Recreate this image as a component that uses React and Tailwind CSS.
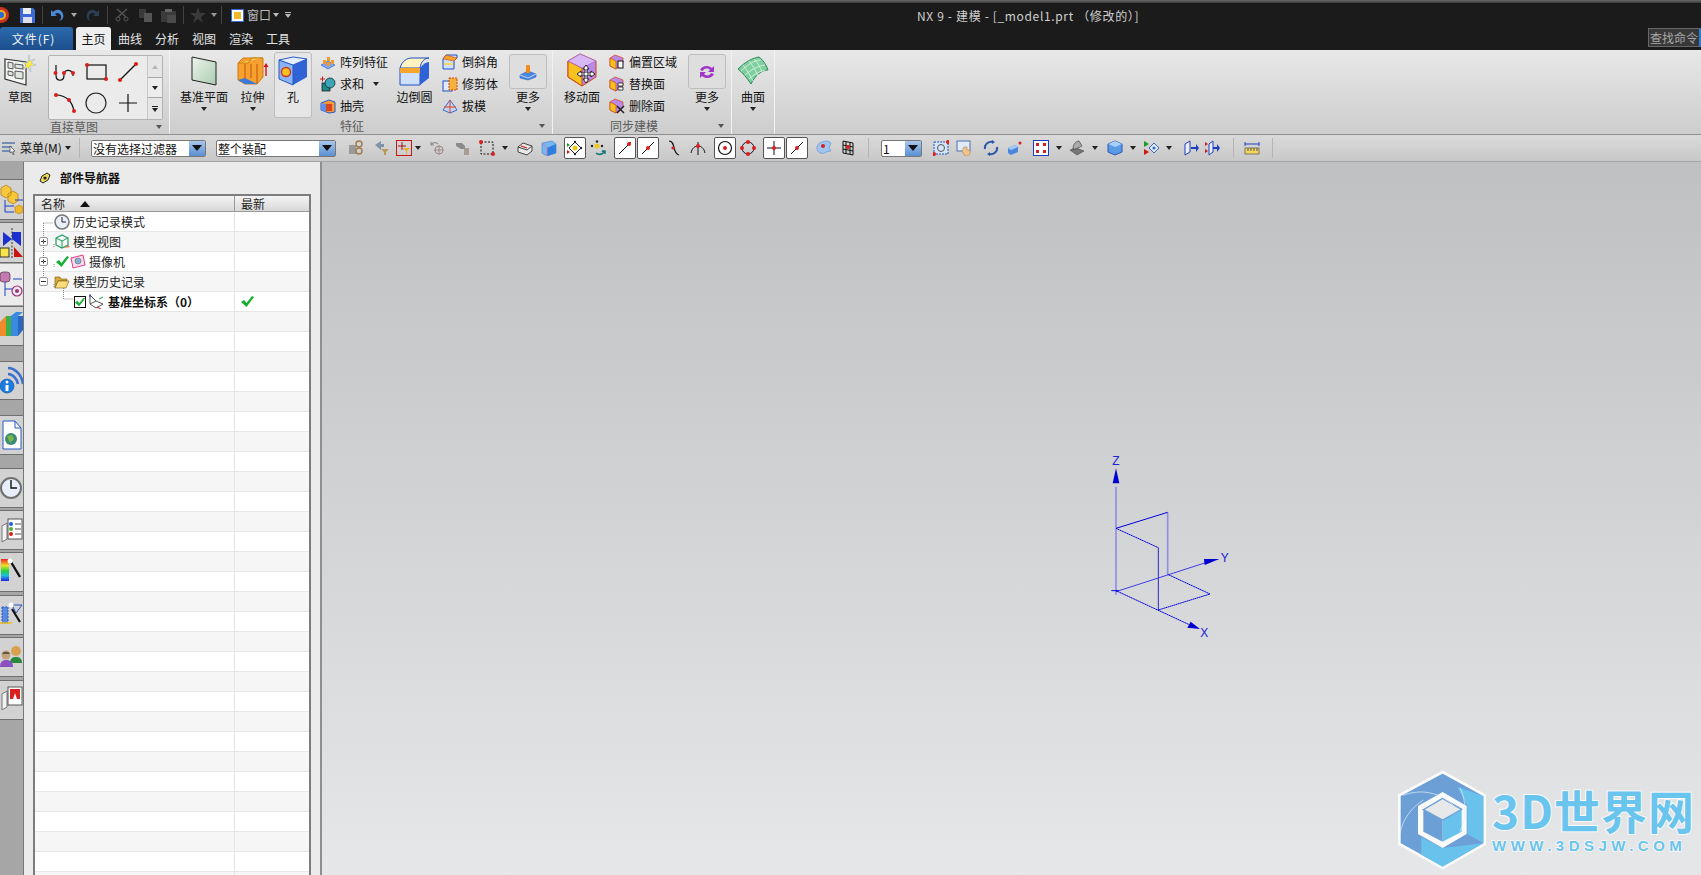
import React from "react";

const Svg = ({ s = 16, h, vb, className = "", children }) => (
  <svg width={s} height={h || s} viewBox={vb || `0 0 ${s} ${h || s}`} className={`shrink-0 block ${className}`}>
    {children}
  </svg>
);

const Dot = ({ x, y, r = 2 }) => <circle cx={x} cy={y} r={r} fill="#d81e1e" />;

// little dropdown triangle used everywhere
const Tri = ({ className = "", color = "border-t-[#222]" }) => (
  <div className={`w-0 h-0 shrink-0 border-x-[3px] border-x-transparent border-t-[4px] ${color} ${className}`} />
);

const SketchIcon = () => (
  <Svg s={32} vb="0 0 32 32">
    <path d="M1 4l21 3v23L1 24z" fill="#f4f6f4" stroke="#333" strokeWidth="1.2" />
    <path d="M4 7l5 1v6l-5-1zM11 9l8 1v4l-8-1zM4 16l5 1v4l-5-1zM11 16l8 1v7l-8-1z" fill="#e0e6e0" stroke="#333" strokeWidth=".8" />
    <path d="M25 0l1 6 5-2-4 4 5 2-6 1 1 6-3-5-5 3 3-5-4-3 6 1z" fill="#ffe93b" stroke="#8ab0ff" strokeWidth=".5" />
  </Svg>
);

const Gal = {
  spline: (
    <Svg s={26} vb="0 0 26 26">
      <path d="M4 6v10c0 7 8 7 8 0 0-6 7-6 9-1v2" fill="none" stroke="#111" strokeWidth="1.2" />
      <Dot x={3.5} y={14} /><Dot x={12} y={14} /><Dot x={21} y={14} />
    </Svg>
  ),
  rect: (
    <Svg s={26} vb="0 0 26 26">
      <rect x="4" y="6" width="19" height="14" fill="none" stroke="#111" strokeWidth="1.2" />
      <Dot x={4} y={6} /><Dot x={23} y={20} />
    </Svg>
  ),
  line: (
    <Svg s={26} vb="0 0 26 26">
      <path d="M5 21L21 5" stroke="#111" strokeWidth="1.2" />
      <Dot x={5} y={21} /><Dot x={21} y={5} />
    </Svg>
  ),
  arc: (
    <Svg s={26} vb="0 0 26 26">
      <path d="M4 5c10 0 17 7 18 17" fill="none" stroke="#111" strokeWidth="1.2" />
      <Dot x={4} y={5} /><Dot x={17} y={10} /><Dot x={22} y={21} />
    </Svg>
  ),
  circle: (
    <Svg s={26} vb="0 0 26 26">
      <circle cx="13" cy="13" r="10" fill="none" stroke="#222" strokeWidth="1.2" />
    </Svg>
  ),
  plus: (
    <Svg s={26} vb="0 0 26 26">
      <path d="M13 4v18M4 13h18" stroke="#111" strokeWidth="1.2" />
    </Svg>
  ),
};

const DatumPlane = () => (
  <Svg s={30} vb="0 0 30 30">
    <defs>
      <linearGradient id="dp" x1="0" y1="0" x2="1" y2="1">
        <stop offset="0" stopColor="#eef4ee" />
        <stop offset="1" stopColor="#a9ccb0" />
      </linearGradient>
    </defs>
    <path d="M3 1l24 5v23L3 24z" fill="url(#dp)" stroke="#222" />
  </Svg>
);

const Extrude = () => (
  <Svg s={32} h={30} vb="0 0 32 30">
    <path d="M1 7l5-5h20v19l-6 7H8L1 24z" fill="#f6a030" stroke="#d27a12" />
    <path d="M1 7h10l4-5h11" fill="#ffd257" stroke="#c77a10" />
    <path d="M8 8v20M20 8v20M14 8v14" stroke="#c2570c" />
    <path d="M1 24l7-2 12 6-12 0z" fill="#3c78d8" />
    <path d="M29 20V9" stroke="#d31414" strokeWidth="1.4" />
    <path d="M26.5 11l2.5-4 2.5 4z" fill="#d31414" />
  </Svg>
);

const HoleCube = () => (
  <Svg s={30} vb="0 0 30 30">
    <path d="M15 9l14-6v18l-14 8z" fill="#2f63d6" />
    <path d="M1 4l14 5v20L1 23z" fill="#8ab4f8" stroke="#2a58c4" />
    <path d="M1 4l14-3 14 2-14 6z" fill="#e3eeff" stroke="#2a58c4" />
    <circle cx="8" cy="16" r="4.5" fill="#f8c020" stroke="#d2341a" strokeWidth="1.4" />
  </Svg>
);

const EdgeBlend = () => (
  <Svg s={31} h={30} vb="0 0 31 30">
    <path d="M1 12h20v17H1z" fill="#cfe0fb" stroke="#1e50c0" />
    <path d="M21 12c3-4 6-6 9-6v16l-9 7z" fill="#2e62d6" />
    <path d="M1 12C3 5 8 2 13 2h17c-4 0-8 3-9 10z" fill="#fff3c2" stroke="#1e50c0" />
    <path d="M1 12h20v5H1z" fill="#f6a42c" />
  </Svg>
);

const MoveFace = () => (
  <Svg s={32} h={36} vb="0 0 32 36">
    <path d="M14 1l16 7v16l-14 9L2 24V8z" fill="#b98ae8" stroke="#d0421a" />
    <path d="M2 8l14 7v18L2 24z" fill="#f7c11e" stroke="#d0421a" />
    <path d="M2 8L14 1l16 7-14 7z" fill="#d7b8f4" stroke="#9a60d0" strokeWidth=".6" />
    <path d="M20 12l3 4h-2v4h4v-2l4 3-4 3v-2h-4v4h2l-3 4-3-4h2v-4h-4v2l-4-3 4-3v2h4v-4h-2z" fill="#fff" stroke="#222" />
  </Svg>
);

const Surface = () => (
  <Svg s={32} h={30} vb="0 0 32 30">
    <path d="M1 13C9 5 16 2 22 1c4 3 7 7 9 13-6 0-13 5-17 14C10 22 6 17 1 13z" fill="#7fcf9e" stroke="#2a8a5a" />
    <path d="M6 9c4 5 7 10 10 16M12 5c4 5 7 10 9 15M17 3c4 4 6 8 8 13M4 15C10 9 18 4 24 4M8 19c6-5 12-9 20-10M12 23c4-4 9-7 16-9" fill="none" stroke="#dff5e6" strokeWidth=".8" />
  </Svg>
);

const Small = {
  pattern: (
    <Svg vb="0 0 16 16">
      <path d="M1 11l7-4 7 4-7 4z" fill="#7fa7ec" stroke="#2a58c4" strokeWidth=".6" />
      <rect x="3" y="6" width="3" height="4" fill="#f39a2e" /><rect x="7" y="3" width="3" height="4" fill="#f39a2e" />
      <rect x="7" y="8" width="3" height="4" fill="#f39a2e" /><rect x="11" y="6" width="3" height="4" fill="#f39a2e" />
    </Svg>
  ),
  unite: (
    <Svg vb="0 0 16 16">
      <path d="M0 3h5M2.5 .5v5" stroke="#d01818" />
      <rect x="2" y="7" width="8" height="8" fill="#1f8a8a" stroke="#111" strokeWidth=".7" />
      <circle cx="10" cy="7" r="5" fill="#3aa6b8" stroke="#111" strokeWidth=".7" />
    </Svg>
  ),
  shell: (
    <Svg vb="0 0 16 16">
      <path d="M1 5l8-3 6 2v10l-6 1-8-3z" fill="#f29a3a" stroke="#2a58c4" />
      <path d="M6 6h6v7H6z" fill="#d8441e" /><path d="M1 5l5 1v8l-5-2z" fill="#5f8fe6" />
    </Svg>
  ),
  chamfer: (
    <Svg vb="0 0 16 16">
      <path d="M1 5l3-4h11v3l-3 3v8H1z" fill="#cfe0fb" stroke="#1e50c0" />
      <path d="M1 5l11 2 3-3-11-3z" fill="#f7a52c" stroke="#d0421a" strokeWidth=".6" />
      <path d="M2 9h9v2H2z" fill="#f4d65a" />
    </Svg>
  ),
  trim: (
    <Svg vb="0 0 16 16">
      <rect x="1" y="5" width="9" height="10" fill="#dfe9fb" stroke="#1e50c0" />
      <rect x="7" y="2" width="8" height="12" fill="#f3b33a" stroke="#d0421a" strokeDasharray="2 1" />
    </Svg>
  ),
  draft: (
    <Svg vb="0 0 16 16">
      <path d="M1 12l7-10 7 10-7 3z" fill="#c3d5f5" stroke="#3e6bd0" />
      <path d="M8 2v13M2 9h12" stroke="#e2401a" />
    </Svg>
  ),
  offset: (
    <Svg vb="0 0 16 16">
      <path d="M6 1l8 3v5l-7 6-6-3V4z" fill="#b98ae8" stroke="#d0421a" strokeWidth=".7" />
      <path d="M1 4l6 3v8l-6-3z" fill="#f7c11e" stroke="#d0421a" strokeWidth=".7" />
      <rect x="9" y="7" width="5" height="7" fill="#fff" stroke="#111" />
    </Svg>
  ),
  replace: (
    <Svg vb="0 0 16 16">
      <path d="M6 1l8 3v5l-7 6-6-3V4z" fill="#b98ae8" stroke="#d0421a" strokeWidth=".7" />
      <path d="M1 4l6 3v8l-6-3z" fill="#f7c11e" stroke="#d0421a" strokeWidth=".7" />
      <path d="M9 7h5v3H9zM9 11h5v3H9z" fill="#fff" stroke="#111" strokeWidth=".8" />
    </Svg>
  ),
  remove: (
    <Svg vb="0 0 16 16">
      <path d="M6 1l8 3v5l-7 6-6-3V4z" fill="#b98ae8" stroke="#d0421a" strokeWidth=".7" />
      <path d="M1 4l6 3v8l-6-3z" fill="#f7c11e" stroke="#d0421a" strokeWidth=".7" />
      <path d="M8 8l7 7M15 8l-7 7" stroke="#222" strokeWidth="1.5" />
    </Svg>
  ),
};

const MoreSolid = () => (
  <Svg s={20} vb="0 0 20 20">
    <path d="M2 13l8-4 8 3v3l-8 3-8-2z" fill="#4a88e0" stroke="#1e50c0" strokeWidth=".5" />
    <rect x="8" y="3" width="4" height="8" rx="1" fill="#f48a1e" />
    <path d="M2 13l8 3 8-4" fill="none" stroke="#bcd4f7" />
  </Svg>
);

const MoreSync = () => (
  <Svg s={20} vb="0 0 20 20">
    <path d="M3 8c2-5 9-5 12-2l2-2v6h-6l2-2c-2-2-6-2-7 1zM17 12c-2 5-9 5-12 2l-2 2v-6h6l-2 2c2 2 6 2 7-1z" fill="#a336c8" />
  </Svg>
);

const LargeBtn = ({ w, icon, label, arrow, boxed }) => (
  <div
    className={`flex flex-col items-center shrink-0 ${w} ${
      boxed ? "mt-[2px] h-[66px] pt-[3px] border border-[#bdbdbd] rounded-[3px] bg-[#e6e6e6]" : "pt-[6px]"
    }`}
  >
    <div className="h-[30px] flex items-center justify-center">{icon}</div>
    <span className="mt-[4px] leading-[14px] text-[12px] whitespace-nowrap text-[#111]">{label}</span>
    {arrow && <Tri className="mt-[3px]" />}
  </div>
);

const MoreBtn = ({ icon, className = "" }) => (
  <div className={`flex flex-col items-center w-[38px] shrink-0 ${className}`}>
    <div className="mt-[4px] w-[38px] h-[35px] border border-[#bdbdbd] rounded-[3px] bg-[#dedede] flex items-center justify-center">
      {icon}
    </div>
    <span className="mt-[1px] leading-[14px] text-[12px] text-[#111]">更多</span>
    <Tri className="mt-[3px]" />
  </div>
);

const SmallList = ({ items, className = "" }) => (
  <div className={`pt-[1px] shrink-0 ${className}`}>
    {items.map((it) => (
      <div key={it.label} className="h-[22px] flex items-center gap-[4px]">
        {it.icon}
        <span className="text-[12px] whitespace-nowrap text-[#111]">{it.label}</span>
        {it.arrow && <Tri className="ml-[5px]" />}
      </div>
    ))}
  </div>
);

const GroupLabel = ({ label, className = "", arrow = true }) => (
  <div className={`h-[16px] flex items-center relative text-[12px] text-[#5a5a5a] ${className}`}>
    <span className="leading-[16px] whitespace-nowrap">{label}</span>
    {arrow && <Tri className="absolute right-[7px] top-[6px]" color="border-t-[#555]" />}
  </div>
);

const Ribbon = () => (
  <div className="h-[85px] flex bg-gradient-to-b from-[#e8e8e8] to-[#cdcdcd] border-b border-[#8f8f8f]">
    {/* sketch group */}
    <div className="w-[170px] shrink-0 flex flex-col border-r border-[#f2f2f2]">
      <div className="h-[69px] flex">
        <LargeBtn w="w-[40px]" icon={<SketchIcon />} label="草图" />
        <div className="ml-[8px] mt-[5px] w-[115px] h-[65px] border border-[#b2b2b2] rounded-[2px] bg-[#ebebeb] flex">
          <div className="w-[98px] pr-[3px] grid grid-cols-3 grid-rows-2 place-items-center">
            {[Gal.spline, Gal.rect, Gal.line, Gal.arc, Gal.circle, Gal.plus].map((g, i) => (
              <div key={i}>{g}</div>
            ))}
          </div>
          <div className="flex-1 flex flex-col border-l border-[#c8c8c8]">
            <div className="h-[21px] flex items-center justify-center bg-[#e6e6e6]">
              <div className="w-0 h-0 border-x-[3px] border-x-transparent border-b-[4px] border-b-[#b5b5b5]" />
            </div>
            <div className="h-[21px] flex items-center justify-center bg-[#ededed] border-y border-[#a8a8a8]">
              <Tri />
            </div>
            <div className="flex-1 flex flex-col items-center justify-center bg-[#e6e6e6]">
              <div className="w-[6px] h-px bg-[#222] mb-px" />
              <Tri />
            </div>
          </div>
        </div>
      </div>
      <GroupLabel label="直接草图" className="pl-[50px]" />
    </div>
    {/* feature group */}
    <div className="w-[383px] shrink-0 flex flex-col border-r border-[#f2f2f2]">
      <div className="h-[69px] flex">
        <LargeBtn w="w-[58px] ml-[5px]" icon={<DatumPlane />} label="基准平面" arrow />
        <LargeBtn w="w-[31px] ml-[4px]" icon={<Extrude />} label="拉伸" arrow />
        <LargeBtn w="w-[38px] ml-[6px]" icon={<HoleCube />} label="孔" boxed />
        <SmallList
          className="ml-[8px] w-[76px]"
          items={[
            { icon: Small.pattern, label: "阵列特征" },
            { icon: Small.unite, label: "求和", arrow: true },
            { icon: Small.shell, label: "抽壳" },
          ]}
        />
        <LargeBtn w="w-[37px]" icon={<EdgeBlend />} label="边倒圆" />
        <SmallList
          className="ml-[9px] w-[55px]"
          items={[
            { icon: Small.chamfer, label: "倒斜角" },
            { icon: Small.trim, label: "修剪体" },
            { icon: Small.draft, label: "拔模" },
          ]}
        />
        <MoreBtn icon={<MoreSolid />} className="ml-[12px]" />
      </div>
      <GroupLabel label="特征" className="pl-[170px]" />
    </div>
    {/* sync group */}
    <div className="w-[179px] shrink-0 flex flex-col border-r border-[#f2f2f2]">
      <div className="h-[69px] flex">
        <LargeBtn w="w-[38px] ml-[10px]" icon={<MoveFace />} label="移动面" />
        <SmallList
          className="ml-[8px] w-[71px]"
          items={[
            { icon: Small.offset, label: "偏置区域" },
            { icon: Small.replace, label: "替换面" },
            { icon: Small.remove, label: "删除面" },
          ]}
        />
        <MoreBtn icon={<MoreSync />} className="ml-[8px]" />
      </div>
      <GroupLabel label="同步建模" className="pl-[57px]" />
    </div>
    {/* surface group */}
    <div className="w-[43px] shrink-0 flex flex-col border-r border-[#f2f2f2]">
      <LargeBtn w="w-[42px]" icon={<Surface />} label="曲面" arrow />
    </div>
  </div>
);

const Combo = ({ text, className = "" }) => (
  <div className={`h-[17px] shrink-0 flex rounded-[2px] border border-[#777] bg-white ${className}`}>
    <span className="flex-1 text-[12px] leading-[15px] pl-px overflow-hidden whitespace-nowrap text-[#111]">{text}</span>
    <div className="w-[16px] bg-gradient-to-b from-[#a8c8ee] to-[#5a8fd0] flex items-center justify-center">
      <div className="w-0 h-0 border-x-[5px] border-x-transparent border-t-[6px] border-t-[#111]" />
    </div>
  </div>
);

const Sep = ({ className = "" }) => <div className={`w-px h-[20px] shrink-0 bg-[#efefef] border-l border-[#b5b5b5] ${className}`} />;

const Boxed = ({ className = "", children }) => (
  <div className={`w-[22px] h-[22px] shrink-0 flex items-center justify-center bg-white border border-[#555] rounded-[2px] ${className}`}>
    {children}
  </div>
);

const TLine = (
  <Svg s={18} vb="0 0 18 18">
    <path d="M3 15L15 3" stroke="#111" />
    <Dot x={13} y={5} />
  </Svg>
);
const TMid = (
  <Svg s={18} vb="0 0 18 18">
    <path d="M3 15L15 3" stroke="#111" />
    <Dot x={9} y={9} />
  </Svg>
);

const Toolbar = () => (
  <div className="h-[27px] flex items-center bg-gradient-to-b from-[#dadada] to-[#c8c8c8] border-b border-[#a5a5a5] pl-[2px]">
    <Svg s={14} vb="0 0 14 14">
      <path d="M0 2h13M0 6h10M0 10h8" stroke="#5577aa" strokeWidth="1.6" />
      <path d="M8 5l5 5-2 .5 1 3-1 .3-1-3-2 1z" fill="#eee" stroke="#333" strokeWidth=".6" />
    </Svg>
    <span className="ml-[4px] text-[12px] w-[46px] whitespace-nowrap text-[#111]">菜单(M)</span>
    <Tri className="ml-[-1px]" />
    <Sep className="ml-[8px]" />
    <Combo text="没有选择过滤器" className="ml-[11px] w-[115px]" />
    <Combo text="整个装配" className="ml-[10px] w-[120px]" />
    <Svg className="ml-[12px]" vb="0 0 16 16">
      <path d="M1 5h7v9H1z" fill="#9a9a9a" /><circle cx="11" cy="4" r="3" fill="none" stroke="#a07a50" strokeWidth="1.4" /><circle cx="11" cy="11" r="3" fill="none" stroke="#a07a50" strokeWidth="1.4" />
    </Svg>
    <Svg className="ml-[10px]" vb="0 0 16 16">
      <path d="M1 5l6-4v3h3v3H7v3z" fill="#7f93a8" /><path d="M7 9h8l-3 3v3h-2v-3z" fill="#b59a5a" />
    </Svg>
    <div className="ml-[6px] w-[16px] h-[16px] shrink-0 border border-[#c81414] flex items-center justify-center">
      <Svg s={12} vb="0 0 12 12">
        <path d="M4 0v8M0 4h8" stroke="#a01010" /><path d="M5 6h7l-3 3v3H8V9z" fill="#e8b020" />
      </Svg>
    </div>
    <Tri className="ml-[3px]" />
    <Svg className="ml-[9px]" vb="0 0 16 16">
      <circle cx="9" cy="10" r="4" fill="none" stroke="#a08888" /><path d="M9 5v10M4 10h10" stroke="#a08888" />
      <path d="M1 5c2-3 5-3 7-1M1 2v3h3" fill="none" stroke="#909090" strokeWidth="1.2" />
    </Svg>
    <Svg className="ml-[9px]" vb="0 0 16 16">
      <path d="M1 3h6l3 3v3H6L1 6z" fill="#8a8a8a" /><rect x="9" y="8" width="5" height="7" fill="#a59e90" />
    </Svg>
    <Svg className="ml-[8px]" vb="0 0 16 16">
      <rect x="2" y="2" width="12" height="12" fill="none" stroke="#111" strokeDasharray="2 1.5" />
      <Dot x={2} y={2} /><Dot x={14} y={14} />
    </Svg>
    <Tri className="ml-[7px]" />
    <Svg className="ml-[9px]" vb="0 0 16 16">
      <path d="M1 7l5-4 9 3v5l-5 4-9-3z" fill="#e8e8e8" stroke="#444" />
      <path d="M1 7l9 3 5-4" fill="none" stroke="#444" /><path d="M4 6l6 2" stroke="#d01818" strokeWidth="1.3" />
    </Svg>
    <Svg className="ml-[8px]" vb="0 0 16 16">
      <path d="M1 3l10-2 4 3v9l-9 3-5-3z" fill="#78b8f0" stroke="#3a7ad0" strokeWidth=".6" />
      <path d="M6 8l9-4v9l-9 3z" fill="#2f7fe0" /><path d="M1 3l5 5v8" fill="none" stroke="#e86a8a" strokeWidth=".7" />
    </Svg>
    <Boxed className="ml-[7px]">
      <Svg s={18} vb="0 0 18 18">
        <path d="M9 3L3 9l6 6 6-6z" fill="none" stroke="#222" /><circle cx="9" cy="9" r="2.5" fill="#f0c818" />
        <path d="M1 4l3 2-3 2z" fill="#1f9a2a" /><path d="M1 11l3 2-3 2z" fill="#d01818" />
        <circle cx="9" cy="3" r="1.2" fill="#222" /><circle cx="15" cy="9" r="1.2" fill="#222" /><circle cx="9" cy="15" r="1.2" fill="#222" />
      </Svg>
    </Boxed>
    <Svg className="ml-[4px]" vb="0 0 16 16">
      <circle cx="7" cy="6" r="2.5" fill="#f0c818" /><circle cx="7" cy="1.5" r="1.2" fill="#222" /><circle cx="2" cy="6" r="1.2" fill="#222" /><circle cx="12" cy="6" r="1.2" fill="#222" />
      <path d="M6 13c2 2 6 2 8-1l-2-1h3v3" fill="none" stroke="#1a7a7a" strokeWidth="1.6" />
    </Svg>
    <Boxed className="ml-[8px]">{TLine}</Boxed>
    <Boxed className="ml-[1px]">{TMid}</Boxed>
    <Svg className="ml-[7px]" vb="0 0 16 16">
      <path d="M3 1c7 0 3 13 10 14" fill="none" stroke="#111" strokeWidth="1.2" /><Dot x={7} y={8} r={1.6} />
    </Svg>
    <Svg className="ml-[8px]" vb="0 0 16 16">
      <path d="M1 13C2 8 5 6 8 6s6 2 7 7M8 2v13" fill="none" stroke="#111" /><Dot x={8} y={6} />
    </Svg>
    <Boxed className="ml-[8px]">
      <Svg s={18} vb="0 0 18 18">
        <circle cx="9" cy="9" r="6.5" fill="none" stroke="#111" strokeWidth="1.2" /><Dot x={9} y={9} />
      </Svg>
    </Boxed>
    <Svg className="ml-[4px]" vb="0 0 16 16">
      <circle cx="8" cy="8" r="6" fill="none" stroke="#111" />
      <Dot x={8} y={2} /><Dot x={14} y={8} /><Dot x={8} y={14} /><Dot x={2} y={8} />
    </Svg>
    <Boxed className="ml-[7px]">
      <Svg s={18} vb="0 0 18 18">
        <path d="M9 2v14M2 9h14" stroke="#111" /><Dot x={9} y={9} />
      </Svg>
    </Boxed>
    <Boxed className="ml-[1px]">{TMid}</Boxed>
    <Svg className="ml-[8px]" vb="0 0 16 16">
      <path d="M1 8C1 3 6 1 12 1l3 2-2 5 2 3-5 1C7 15 1 13 1 8z" fill="#9fc4ef" stroke="#5a8fd0" strokeWidth=".6" /><Dot x={7} y={6} />
    </Svg>
    <Svg className="ml-[8px]" vb="0 0 16 16">
      <path d="M3 1l10 2v12L3 13zM3 5l10 2M3 9l10 2M6 2v12M10 2v12" fill="none" stroke="#111" /><Dot x={8} y={7} />
    </Svg>
    <Sep className="ml-[12px]" />
    <Combo text="1" className="ml-[12px] w-[41px]" />
    <Svg className="ml-[11px]" vb="0 0 16 16">
      <rect x="1" y="2" width="14" height="12" fill="#d6e6fa" stroke="#1e50c0" strokeDasharray="2 1" />
      <circle cx="8" cy="8" r="3.5" fill="none" stroke="#555" /><Dot x={1} y={14} /><Dot x={15} y={2} />
    </Svg>
    <Svg className="ml-[7px]" vb="0 0 16 16">
      <rect x="1" y="1" width="13" height="10" fill="#e2ecf8" stroke="#4a70b0" /><path d="M8 7h3v3h3v4l-2 2H9l-3-5z" fill="#f0c48c" stroke="#a07040" strokeWidth=".5" />
    </Svg>
    <Svg className="ml-[11px]" vb="0 0 16 16">
      <path d="M2 9C1 4 6 1 10 2M14 7c1 5-4 8-8 7" fill="none" stroke="#2a58a8" strokeWidth="2" /><path d="M9 0l3 2-3 2zM7 12l-3 2 3 2z" fill="#2a58a8" />
    </Svg>
    <Svg className="ml-[8px]" vb="0 0 16 16">
      <path d="M1 8l7-3 3 2v5l-7 3-3-2z" fill="#4a88e0" /><path d="M8 5l3 2-7 3-3-2z" fill="#a8c8f4" /><Dot x={13} y={3} r={1.5} />
    </Svg>
    <Svg className="ml-[10px]" vb="0 0 16 16">
      <rect x="0" y="0" width="16" height="16" fill="#fff" stroke="#1e3ec0" strokeWidth="2" />
      <path d="M3 3h3v3H3zM10 3h3v3h-3zM3 10h3v3H3zM10 10h3v3h-3z" fill="#d81e1e" />
    </Svg>
    <Tri className="ml-[7px]" />
    <Svg className="ml-[7px]" vb="0 0 16 16">
      <path d="M1 10l6-2 8 3-7 4z" fill="#777" stroke="#333" strokeWidth=".5" /><path d="M4 9c0-5 3-8 6-8l3 5-6 3z" fill="#aaa" stroke="#333" strokeWidth=".6" />
    </Svg>
    <Tri className="ml-[7px]" />
    <Svg className="ml-[9px]" vb="0 0 16 16">
      <path d="M8 1l7 3v8l-7 3-7-3V4z" fill="#5a9ae6" stroke="#2a58b4" /><path d="M1 4l7 3 7-3-7-3z" fill="#a8d0f8" />
    </Svg>
    <Tri className="ml-[7px]" />
    <Svg className="ml-[7px]" vb="0 0 16 16">
      <path d="M1 1l5 3-5 3z" fill="#1f9a2a" /><path d="M1 9l5 3-5 3z" fill="#d01818" />
      <path d="M6 8l5-5 5 5-5 5z" fill="#dfe9fb" stroke="#3a6ac0" /><circle cx="11" cy="8" r="1.5" fill="#3a6ac0" />
    </Svg>
    <Tri className="ml-[7px]" />
    <Svg className="ml-[11px]" vb="0 0 16 16">
      <path d="M2 4l5-3v11l-5 3z" fill="#e8eefa" stroke="#1e3ec0" /><path d="M8 7h5V4l3 4-3 4V9H8z" fill="#1e3ec0" />
    </Svg>
    <Svg className="ml-[5px]" vb="0 0 16 16">
      <path d="M1 2l3 2-3 2zM1 9l3 2-3 2z" fill="#d01818" /><path d="M5 4l4-3v11l-4 3z" fill="#e8eefa" stroke="#1e3ec0" /><path d="M9 7h4V4l3 4-3 4V9H9z" fill="#1e3ec0" />
    </Svg>
    <Sep className="ml-[13px]" />
    <Svg className="ml-[10px]" vb="0 0 16 16">
      <path d="M1 4h14M1 2v4M15 2v4" stroke="#1e3ec0" /><rect x="1" y="8" width="14" height="6" fill="#f4d65a" stroke="#555" strokeWidth=".7" />
      <path d="M4 8v3M7 8v3M10 8v3M13 8v3" stroke="#555" />
    </Svg>
    <Sep className="ml-[12px]" />
  </div>
);

const stripIcons = {
  a: (
    <Svg s={24} h={36} vb="0 0 24 36">
      <path d="M1 6l5-3 5 3v7l-5 3-5-3zM8 12l5-3 5 3v7l-5 3-5-3z" fill="#f4c83a" stroke="#b07a10" strokeWidth=".7" />
      <path d="M5 18v12h9M5 24h9M15 18h9" stroke="#1e3ec0" fill="none" />
      <path d="M15 25l4-2 4 2v5l-4 2-4-2z" fill="#f0b828" stroke="#b07a10" strokeWidth=".6" />
    </Svg>
  ),
  b: (
    <Svg s={24} h={36} vb="0 0 24 36">
      <path d="M3 7l9 7V7l9 0v14l-9-7-9 7z" fill="#1c2fd0" />
      <path d="M12 3v30" stroke="#333" strokeDasharray="2 1.5" />
      <rect x="0" y="23" width="9" height="9" fill="#f6e44a" stroke="#333" />
      <path d="M14 32V22l9 10z" fill="#c81414" />
    </Svg>
  ),
  c: (
    <Svg s={24} h={36} vb="0 0 24 36">
      <rect x="0" y="5" width="10" height="10" rx="3" fill="#c37ab0" stroke="#55304a" strokeWidth=".7" />
      <path d="M5 15v14M5 22h8M13 12h9" stroke="#1e3ec0" fill="none" />
      <circle cx="17" cy="24" r="5" fill="none" stroke="#a03080" strokeWidth="1.2" /><circle cx="17" cy="24" r="2" fill="#a03080" />
    </Svg>
  ),
  d: (
    <Svg s={24} h={36} vb="0 0 24 36">
      <path d="M0 14l6-6v20H0z" fill="#f08a2a" /><path d="M6 8h5v20H6z" fill="#3fb048" />
      <path d="M11 8l5-4h7l-5 4v20h-7z" fill="#3a8ae0" /><path d="M18 8h5v14l-5 6z" fill="#2a68c0" />
    </Svg>
  ),
  info: (
    <Svg s={24} h={32} vb="0 0 24 32">
      <path d="M8 3c7 0 14 7 15 16M8 9c5 0 9 5 10 10" fill="none" stroke="#3a6fd0" strokeWidth="2.6" />
      <circle cx="7" cy="21" r="7" fill="#1a7ae0" stroke="#0e4aa0" strokeWidth=".6" />
      <circle cx="7" cy="17" r="1.5" fill="#fff" /><path d="M5.5 20h3v6h-3z" fill="#fff" />
    </Svg>
  ),
  doc: (
    <Svg s={24} h={32} vb="0 0 24 32">
      <path d="M3 2h12l6 7v21H3z" fill="#fff" stroke="#2a58c4" />
      <path d="M15 2v7h6" fill="none" stroke="#2a58c4" />
      <circle cx="11" cy="20" r="6" fill="#3a8a78" /><path d="M7 17l5-1 2 4-4 4z" fill="#7ab848" />
    </Svg>
  ),
  clock: (
    <Svg s={24} h={32} vb="0 0 24 32">
      <circle cx="11" cy="16" r="10" fill="#e8eefa" stroke="#707070" strokeWidth="2" />
      <path d="M11 8v8h6" fill="none" stroke="#111" strokeWidth="1.4" />
    </Svg>
  ),
  list: (
    <Svg s={24} h={32} vb="0 0 24 32">
      <path d="M2 12l5-3v16l-5 3z" fill="#f2f2f2" stroke="#777" />
      <rect x="8" y="5" width="14" height="20" fill="#fff" stroke="#555" />
      <circle cx="11" cy="10" r="2" fill="#1e60d8" /><circle cx="11" cy="15" r="2" fill="#4ab030" /><circle cx="11" cy="20" r="2" fill="#d82020" />
      <path d="M15 10h6M15 15h6M15 20h6" stroke="#555" />
    </Svg>
  ),
  rainbow: (
    <Svg s={24} h={32} vb="0 0 24 32">
      <defs>
        <linearGradient id="rb" x1="0" y1="0" x2="0" y2="1">
          <stop offset="0" stopColor="#f02020" /><stop offset=".3" stopColor="#f0e020" />
          <stop offset=".55" stopColor="#20d040" /><stop offset=".75" stopColor="#20c0e0" /><stop offset="1" stopColor="#2020e0" />
        </linearGradient>
      </defs>
      <rect x="1" y="3" width="8" height="22" fill="url(#rb)" />
      <path d="M11 6l9 15" stroke="#111" strokeWidth="2.4" /><circle cx="10" cy="5" r="2.5" fill="#fff" />
    </Svg>
  ),
  wand: (
    <Svg s={24} h={32} vb="0 0 24 32">
      <rect x="2" y="8" width="6" height="16" fill="#5a8ae0" stroke="#2a58c4" strokeDasharray="2 1" />
      <path d="M0 24h12" stroke="#e8c020" strokeWidth="1.5" />
      <path d="M12 6h10l-6 8z" fill="none" stroke="#2a58c4" />
      <path d="M12 10l8 13" stroke="#111" strokeWidth="2.2" /><circle cx="11" cy="6" r="2.5" fill="#fff" />
    </Svg>
  ),
  people: (
    <Svg s={24} h={32} vb="0 0 24 32" className="-translate-y-[2px]">
      <circle cx="16" cy="12" r="5" fill="#d8a050" /><path d="M10 24c0-5 3-6 6-6s6 1 6 6z" fill="#2a8a3a" />
      <circle cx="6" cy="16" r="4.5" fill="#c8a080" /><path d="M0 28c0-6 3-7 6-7s7 1 7 7z" fill="#8a50c0" />
      <path d="M2 15c1-3 7-3 8 0z" fill="#5a5a40" />
    </Svg>
  ),
  theatre: (
    <Svg s={24} h={32} vb="0 0 24 32" className="-translate-y-[2px]">
      <path d="M2 12l5-3v16l-5 3z" fill="#f2f2f2" stroke="#777" />
      <rect x="8" y="5" width="14" height="18" fill="#fff" stroke="#555" />
      <rect x="10" y="7" width="10" height="10" fill="#d82020" /><path d="M13 17l2-6 2 6z" fill="#e8eefa" />
    </Svg>
  ),
};

const StripBtn = ({ h, active, icon, className = "" }) => (
  <div
    className={`${h} shrink-0 overflow-hidden flex items-center border-y ${
      active ? "bg-[#ebebeb] border-transparent" : "bg-[#d2d2d2] border-[#6f6f6f]"
    } ${className}`}
  >
    {icon}
  </div>
);

const LeftStrip = () => (
  <div className="w-[24px] shrink-0 bg-[#a6a6a6] border-r border-[#777] flex flex-col pt-[17px]">
    <StripBtn h="h-[41px]" icon={stripIcons.a} />
    <StripBtn h="h-[41px]" icon={stripIcons.b} className="mt-[2px]" />
    <StripBtn h="h-[41px]" icon={stripIcons.c} active className="mt-[1px]" />
    <StripBtn h="h-[40px]" icon={stripIcons.d} className="mt-[1px]" />
    <StripBtn h="h-[39px]" icon={stripIcons.info} className="mt-[15px]" />
    <StripBtn h="h-[40px]" icon={stripIcons.doc} className="mt-[15px]" />
    <StripBtn h="h-[40px]" icon={stripIcons.clock} className="mt-[13px]" />
    <StripBtn h="h-[40px]" icon={stripIcons.list} className="mt-[2px]" />
    <StripBtn h="h-[40px]" icon={stripIcons.rainbow} className="mt-[2px]" />
    <StripBtn h="h-[40px]" icon={stripIcons.wand} className="mt-[3px]" />
    <StripBtn h="h-[40px]" icon={stripIcons.people} className="mt-[2px]" />
    <StripBtn h="h-[40px]" icon={stripIcons.theatre} className="mt-[3px]" />
  </div>
);

const Check = ({ className = "" }) => (
  <Svg s={13} vb="0 0 13 13" className={className}>
    <path d="M0 7l3-2 2.5 3L11 1l2 1-7.5 10z" fill="#16b030" />
  </Svg>
);

const Expander = ({ minus }) => (
  <div className="ml-[4px] w-[9px] h-[9px] shrink-0 bg-white border border-[#999] rounded-[2px] flex items-center justify-center relative">
    <div className="w-[5px] h-px bg-[#333]" />
    {!minus && <div className="absolute w-px h-[5px] bg-[#333]" />}
  </div>
);

const treeRows = [
  {
    pl: "pl-[19px]",
    content: (
      <>
        <Svg vb="0 0 16 16">
          <circle cx="8" cy="8" r="7" fill="#e8eefa" stroke="#777" strokeWidth="1.6" />
          <path d="M8 3v5h4" fill="none" stroke="#222" />
        </Svg>
        <span className="ml-[3px] text-[12px] text-[#222]">历史记录模式</span>
      </>
    ),
  },
  {
    pl: "",
    content: (
      <>
        <Expander />
        <Svg className="ml-[6px]" vb="0 0 16 16">
          <path d="M8 1l6 3v7l-6 3-6-3V4z" fill="none" stroke="#1ca060" strokeWidth="1.2" />
          <path d="M2 4l6 3 6-3M8 7v7" fill="none" stroke="#1ca060" /><path d="M9 14l5-2-1-2 3 3z" fill="#e8602a" />
        </Svg>
        <span className="ml-[3px] text-[12px] text-[#222]">模型视图</span>
      </>
    ),
  },
  {
    pl: "",
    content: (
      <>
        <Expander />
        <Check className="ml-[8px]" />
        <Svg className="ml-[1px]" vb="0 0 16 16">
          <path d="M1 4l12-3 2 10-12 3z" fill="#f4e0ea" stroke="#e83a8a" />
          <circle cx="8" cy="7" r="3" fill="#8ab0d8" stroke="#666" strokeWidth=".6" />
        </Svg>
        <span className="ml-[3px] text-[12px] text-[#222]">摄像机</span>
      </>
    ),
  },
  {
    pl: "",
    content: (
      <>
        <Expander minus />
        <Svg className="ml-[6px]" vb="0 0 16 16">
          <path d="M1 3h5l1 2h6v2H4l-3 7z" fill="#d8a838" stroke="#7a5a10" strokeWidth=".6" />
          <path d="M4 7h11l-3 7H1z" fill="#fbdc7a" stroke="#7a5a10" strokeWidth=".6" />
        </Svg>
        <span className="ml-[3px] text-[12px] text-[#222]">模型历史记录</span>
      </>
    ),
  },
  {
    pl: "pl-[39px]",
    content: (
      <>
        <div className="w-[12px] h-[12px] shrink-0 bg-white border border-[#111] flex items-center justify-center">
          <Svg s={10} vb="0 0 13 13">
            <path d="M0 7l3-2 2.5 3L11 1l2 1-7.5 10z" fill="#16b030" />
          </Svg>
        </div>
        <Svg className="ml-[3px]" s={15} vb="0 0 15 15">
          <path d="M1 1v9l6 4 7-4-7-3zM1 10l6-3" fill="none" stroke="#555" />
          <path d="M1 0v3" stroke="#1e3ec0" /><path d="M10 5l4-2" stroke="#1ca030" /><path d="M8 13l4 2" stroke="#d01818" />
        </Svg>
        <span className="ml-[4px] text-[12px] font-bold text-[#111] whitespace-nowrap">基准坐标系（0）</span>
      </>
    ),
    latest: true,
  },
];

const rowKeys = Array.from({ length: 34 }, (_, i) => i);

const Navigator = () => (
  <div className="w-[298px] shrink-0 bg-[#ebebeb] border-r-2 border-[#8f8f8f] flex flex-col pl-[9px] pr-[9px]">
    <div className="h-[32px] shrink-0 flex items-center pl-[6px]">
      <Svg s={12} vb="0 0 12 12">
        <path d="M1 9l2-5 5-3 3 2-2 5-5 3z" fill="#e8d860" stroke="#222" />
        <circle cx="6" cy="6" r="1.6" fill="#222" />
      </Svg>
      <span className="ml-[9px] text-[12px] font-bold text-[#111]">部件导航器</span>
    </div>
    <div className="flex-1 min-h-0 overflow-hidden border-x-2 border-t-2 border-[#7d7d7d] bg-white relative">
      <div className="h-[16px] flex bg-gradient-to-b from-[#f4f4f4] to-[#d8d8d8] border-b border-[#9a9a9a] text-[12px] text-[#222] leading-[15px]">
        <div className="w-[200px] shrink-0 border-r border-[#999] flex items-center pl-[6px]">
          <span>名称</span>
          <div className="ml-[15px] w-0 h-0 border-x-[5px] border-x-transparent border-b-[6px] border-b-[#111]" />
        </div>
        <div className="pl-[6px]">最新</div>
      </div>
      {rowKeys.map((i) => {
        const row = treeRows[i];
        return (
          <div key={i} className={`h-[20px] flex border-b border-[#e6e6e6] ${i % 2 ? "bg-[#f6f6f6]" : "bg-white"}`}>
            <div className={`w-[200px] shrink-0 border-r border-[#e2e2e2] flex items-center ${row ? row.pl : ""}`}>
              {row && row.content}
            </div>
            <div className="flex items-center pl-[6px]">{row && row.latest && <Check />}</div>
          </div>
        );
      })}
      {/* tree connector lines */}
      <svg className="absolute left-0 top-0 pointer-events-none" width="60" height="120">
        <path d="M8.5 27V81M8.5 27H18M19 51v-3M19 71v-3M19 91v-3M28.5 92v11H38" fill="none" stroke="#888" strokeDasharray="1 1" />
      </svg>
    </div>
  </div>
);

const Csys = () => (
  <svg className="absolute left-[758px] top-[278px]" width="180" height="210" viewBox="0 0 540 630">
    <g fill="none" stroke="#0000e0">
      <path d="M108 140V465" stroke="#8f8fe6" strokeWidth="5" />
      <path d="M263 217V403" stroke="#8f8fe6" strokeWidth="5" />
      <path d="M108 265L263 217" strokeWidth="3" />
      <path d="M108 265L235 323V510" strokeWidth="3" strokeDasharray="5 1" />
      <path d="M108 455L380 367" stroke="#3c3cea" strokeWidth="3" />
      <path d="M235 510L390 462L263 403" strokeWidth="3" strokeDasharray="5 1" />
      <path d="M108 452L330 555" strokeWidth="3" strokeDasharray="5 1" />
      <path d="M94 452h22" strokeWidth="3" />
    </g>
    <path d="M108 85l10 45h-20z" fill="#0000d0" />
    <path d="M418 357l-44 18-2-18z" fill="#0000d0" />
    <path d="M360 567l-38-4 10-18z" fill="#0000d0" />
    <text x="108" y="76" textAnchor="middle" fontSize="36" fill="#2020d8" fontFamily="Liberation Sans">Z</text>
    <text x="434" y="365" textAnchor="middle" fontSize="36" fill="#2020d8" fontFamily="Liberation Sans">Y</text>
    <text x="373" y="590" textAnchor="middle" fontSize="36" fill="#2020d8" fontFamily="Liberation Sans">X</text>
  </svg>
);

const Watermark = () => (
  <div className="absolute right-0 bottom-0 w-[321px] h-[115px] flex">
    <svg width="112" height="115" viewBox="0 0 336 345" className="shrink-0">
      <path d="M188 36l126 70v146l-126 72-130-72V106z" fill="#6c9fd6" stroke="#fbfbfb" strokeWidth="8" />
      <path d="M232 80l78 28v142l-48-28V138z" fill="#69c2ec" />
      <path d="M124 232l62 32 124-14-122 70-64-36z" fill="#69c2ec" />
      <path d="M188 96l72 42v84l-72 42-74-42v-84z" fill="#fbfbfb" />
      <path d="M188 180v65l-58-30v-66z" fill="#6c9fd6" />
      <path d="M188 180v65l57-30v-66z" fill="#69c2ec" />
      <path d="M188 115l57 33-57 32-58-31z" fill="#e7e8ea" stroke="#6c9fd6" strokeWidth="4" />
      <path d="M70 106c50-20 110-10 150 30M60 220c10-50 40-80 70-100M240 84c20 40 20 90 0 130" fill="none" stroke="#e8f2fb" strokeWidth="2" />
    </svg>
    <div className="pt-[26px] flex flex-col text-[#69c4ee] font-bold leading-none">
      <div className="text-[46px] leading-[46px] whitespace-nowrap [-webkit-text-stroke:2px_#fafafa] [paint-order:stroke_fill] tracking-[1px]">
        3D世界网
      </div>
      <div className="mt-[6px] text-[15px] leading-[15px] whitespace-nowrap tracking-[4.5px] font-['Liberation_Sans',sans-serif] [-webkit-text-stroke:1.5px_#fafafa] [paint-order:stroke_fill]">
        WWW.3DSJW.COM
      </div>
    </div>
  </div>
);

const QuickAccess = () => (
  <div className="flex items-center h-[24px] text-[12px] text-[#bbb]">
    <Svg s={11} h={18} vb="0 0 11 18">
      <circle cx="1" cy="9" r="8" fill="#c8321e" /><circle cx="1" cy="9" r="5" fill="#e8b020" /><circle cx="1" cy="9" r="3" fill="#2a6ad8" />
    </Svg>
    <Svg s={15} className="ml-[9px]" vb="0 0 15 15">
      <path d="M0 0h13l2 2v13H0z" fill="#3a6ad8" /><rect x="3" y="0" width="8" height="6" fill="#eee" /><rect x="3" y="9" width="9" height="6" fill="#dde" />
    </Svg>
    <div className="ml-[7px] w-px h-[18px] bg-[#444]" />
    <Svg s={14} className="ml-[7px]" vb="0 0 14 14">
      <path d="M1 2v6h6L5 6c2-2 5-1 6 2 .5 2-.5 4-2 5 4-1 5-4 4-7C12 2 7 0 3 4z" fill="#4a88d8" />
    </Svg>
    <Tri className="ml-[7px]" color="border-t-[#aaa]" />
    <Svg s={14} className="ml-[9px]" vb="0 0 14 14">
      <path d="M13 2v6H7l2-2C7 4 4 5 3 8c-.5 2 .5 4 2 5-4-1-5-4-4-7C2 2 7 0 11 4z" fill="#2c3e55" />
    </Svg>
    <div className="ml-[7px] w-px h-[18px] bg-[#444]" />
    <Svg s={14} className="ml-[7px]" vb="0 0 14 14">
      <path d="M12 1L3 9M2 1l9 8" stroke="#555" strokeWidth="1.4" /><circle cx="3" cy="11" r="2" fill="none" stroke="#555" /><circle cx="11" cy="11" r="2" fill="none" stroke="#555" />
    </Svg>
    <Svg s={14} className="ml-[10px]" vb="0 0 14 14">
      <path d="M0 1h7v9H0z" fill="#3a3a3a" /><path d="M5 5h8v9H5z" fill="#555" />
    </Svg>
    <Svg s={15} className="ml-[8px]" vb="0 0 15 15">
      <path d="M0 3h15v11H0z" fill="#3a3a3a" /><path d="M4 1h7v3H4z" fill="#666" /><path d="M6 7h9v8H6z" fill="#4a4a4a" />
    </Svg>
    <div className="ml-[7px] w-px h-[18px] bg-[#444]" />
    <Svg s={18} className="ml-[5px]" vb="0 0 18 18">
      <path d="M9 1l2 6h6l-5 4 2 6-5-4-5 4 2-6-5-4h6z" fill="#3a3a3a" />
    </Svg>
    <Tri className="ml-[4px]" color="border-t-[#999]" />
    <div className="ml-[4px] w-px h-[18px] bg-[#444]" />
    <div className="ml-[9px] w-[13px] h-[13px] shrink-0 bg-white border border-[#3a6ad8] flex items-center justify-center">
      <div className="w-[7px] h-[7px] bg-[#f0b828]" />
    </div>
    <span className="ml-[3px] whitespace-nowrap">窗口</span>
    <Tri className="ml-[2px]" color="border-t-[#bbb]" />
    <div className="ml-[6px] flex flex-col items-center">
      <div className="w-[6px] h-px bg-[#bbb] mb-px" />
      <Tri color="border-t-[#bbb]" />
    </div>
  </div>
);

const TitleBar = () => (
  <div className="h-[50px] shrink-0 bg-[#1b1b1b] flex flex-col relative overflow-hidden">
    <div className="h-[3px] bg-gradient-to-b from-[#6a6a6a] to-[#3a3a3a]" />
    <div className="flex justify-between relative">
      <QuickAccess />
      <div className="absolute left-[917px] top-[4px] text-[12px] tracking-[0.65px] text-[#cfcfcf] whitespace-nowrap">
        NX 9 - 建模 - [_model1.prt （修改的）]
      </div>
    </div>
    <div className="flex-1 flex items-end">
      <div className="w-[73px] h-[23px] rounded-t-[3px] bg-gradient-to-b from-[#2a6aae] to-[#1d4f8c] text-[12px] tracking-[1px] pr-[6px] text-[#f2f2f2] flex items-center justify-center whitespace-nowrap">
        文件(F)
      </div>
      <div className="ml-[3px] w-[35px] h-[23px] rounded-t-[3px] bg-[#eeeeee] text-[12px] text-[#111] flex items-center justify-center">
        主页
      </div>
      <div className="ml-[7px] flex gap-[13px] h-[23px] items-center text-[12px] text-[#e4e4e4]">
        <span>曲线</span>
        <span>分析</span>
        <span>视图</span>
        <span>渲染</span>
        <span>工具</span>
      </div>
      <div className="ml-auto h-[19px] mb-[3px] w-[53px] border border-[#666] bg-[#383838] border-r-2 border-r-[#2a80d0] text-[12px] leading-[17px] text-[#a8a8a8] text-center whitespace-nowrap">
        查找命令
      </div>
    </div>
  </div>
);

export default function App() {
  return (
    <div className="w-screen h-screen overflow-hidden flex flex-col font-['Noto_Sans_CJK_SC',sans-serif]">
      <TitleBar />
      <Ribbon />
      <Toolbar />
      <div className="flex-1 min-h-0 flex">
        <LeftStrip />
        <Navigator />
        <div className="flex-1 relative bg-gradient-to-b from-[#bfc0c2] to-[#e6e7e9] overflow-hidden">
          <Csys />
          <Watermark />
        </div>
      </div>
    </div>
  );
}
